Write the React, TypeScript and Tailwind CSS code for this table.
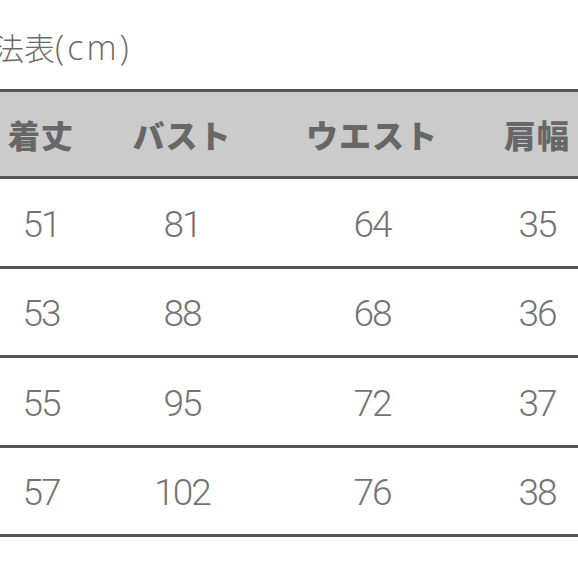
import React from 'react'

const cols = ['着丈', 'バスト', 'ウエスト', '肩幅']

const rows = [
  ['51', '81', '64', '35'],
  ['53', '88', '68', '36'],
  ['55', '95', '72', '37'],
  ['57', '102', '76', '38'],
]

const grid = 'grid grid-cols-[82px_200px_180px_150px] items-center'

export default function App() {
  return (
    <div className="w-[578px] h-[578px] overflow-hidden bg-white">
      {/* title (cropped on the left in the source) */}
      <div
        className="h-[89px] pt-[27px] -ml-[38px] text-[31px] leading-[40px] text-[#6b6b6b] whitespace-nowrap"
        style={{ fontFamily: '"Noto Sans CJK JP", sans-serif', fontWeight: 300 }}
      >
        寸法表
        <span className="text-[34px] tracking-[3px]" style={{ fontFamily: '"Open Sans", sans-serif', fontWeight: 300 }}>
          (cm)
        </span>
      </div>

      <div className="w-[612px]">
        {/* header */}
        <div
          className={`${grid} h-[90px] border-t-[3px] border-b-[3px] border-[#555] bg-[#cbcbcb]`}
          style={{ fontFamily: '"Noto Sans CJK JP", sans-serif' }}
        >
          {cols.map((c) => (
            <div key={c} className="text-center text-[32px] font-black text-[#676767] leading-none tracking-[1px]">
              {c}
            </div>
          ))}
        </div>

        {/* body */}
        {rows.map((r, i) => (
          <div key={i} className={`${grid} h-[89.5px] border-b-[3px] border-[#555]`}>
            {r.map((v, j) => (
              <div
                key={j}
                className="text-center text-[37px] leading-none text-[#747474] tracking-[-2px] pt-[4px]"
                style={{ fontFamily: 'Roboto, sans-serif', fontWeight: 300 }}
              >
                {v}
              </div>
            ))}
          </div>
        ))}
        <div className="h-[60px]" />
      </div>
    </div>
  )
}
